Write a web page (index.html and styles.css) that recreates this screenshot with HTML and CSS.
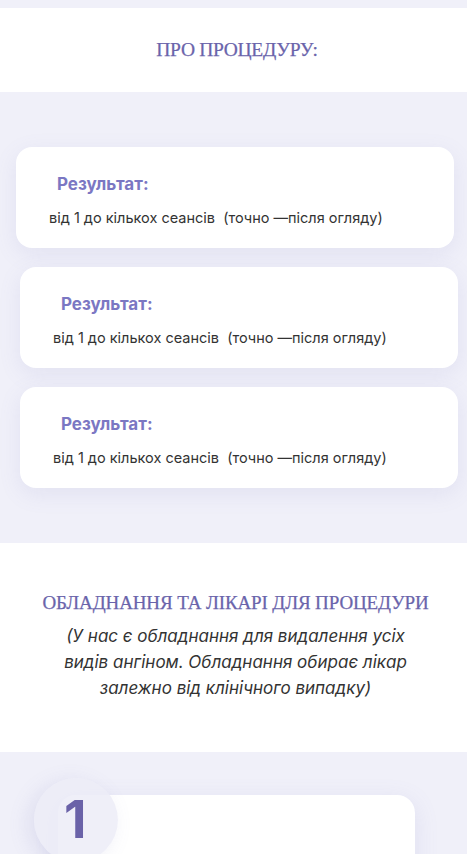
FILE: index.html
```html
<!DOCTYPE html>
<html lang="uk">
<head>
<meta charset="utf-8">
<title>Про процедуру</title>
<link rel="stylesheet" href="styles.css">
</head>
<body>
<section class="band band-white intro">
  <h2 class="title">ПРО ПРОЦЕДУРУ:</h2>
</section>
<section class="band band-lav results">
  <div class="card card-first">
    <h3 class="card-head">Результат:</h3>
    <p class="card-text">від 1 до кількох сеансів&nbsp; (точно —після огляду)</p>
  </div>
  <div class="card">
    <h3 class="card-head">Результат:</h3>
    <p class="card-text">від 1 до кількох сеансів&nbsp; (точно —після огляду)</p>
  </div>
  <div class="card">
    <h3 class="card-head">Результат:</h3>
    <p class="card-text">від 1 до кількох сеансів&nbsp; (точно —після огляду)</p>
  </div>
</section>
<section class="band band-white equip">
  <h2 class="title title-wide">ОБЛАДНАННЯ ТА ЛІКАРІ ДЛЯ ПРОЦЕДУРИ</h2>
  <p class="note">(У нас є обладнання для видалення усіх видів ангіном. Обладнання обирає лікар залежно від клінічного випадку)</p>
</section>
<section class="band band-lav steps">
  <div class="step">
    <div class="step-card"></div>
    <div class="step-num">1</div>
  </div>
</section>
</body>
</html>
```
FILE: styles.css
```css
html, body {
  margin: 0;
  padding: 0;
}
body {
  background: #f0f0f9;
  font-family: Inter, "Noto Sans", sans-serif;
  color: #333;
  overflow: hidden;
  height: 854px;
}
.band-white {
  background: #fff;
}
.band-lav {
  background: #f0f0f9;
}
.intro {
  margin-top: 8px;
  height: 84px;
  box-sizing: border-box;
  padding-left: 7px;
  display: flex;
  align-items: center;
  justify-content: center;
}
.title {
  margin: 0;
  font-family: "Liberation Serif", serif;
  font-weight: normal;
  font-size: 19.5px;
  letter-spacing: -0.3px;
  color: #6a64ab;
  text-align: center;
  -webkit-text-stroke: 0.25px #6a64ab;
}
.results {
  padding: 55px 0 55px;
  display: flex;
  flex-direction: column;
  gap: 19px;
}
.card {
  background: #fff;
  border-radius: 16px;
  margin-left: 20px;
  width: 438px;
  height: 101px;
  box-sizing: border-box;
  padding: 27px 0 0 33px;
  box-shadow: 0 6px 22px rgba(120, 120, 190, 0.12);
}
.card-first {
  margin-left: 16px;
}
.card-head {
  margin: 0 0 0 8px;
  font-size: 17px;
  font-weight: 700;
  color: #7b77c3;
  line-height: 20px;
}
.card-text {
  margin: 14px 0 0;
  font-size: 14.5px;
  line-height: 20px;
  color: #333;
}
.equip {
  height: 209px;
  box-sizing: border-box;
  padding-top: 48px;
  padding-left: 4px;
  text-align: center;
}
.title-wide {
  font-size: 19px;
  line-height: 24px;
  letter-spacing: -0.12px;
}
.note {
  margin: 8px auto 0;
  width: 360px;
  font-style: italic;
  font-size: 17px;
  line-height: 26px;
  color: #333;
}
.steps {
  height: 102px;
  padding-top: 43px;
  box-sizing: border-box;
}
.step {
  position: relative;
  height: 200px;
}
.step-card {
  margin-left: 58px;
  width: 357px;
  height: 200px;
  background: #fff;
  border-radius: 18px;
  box-shadow: 0 6px 24px rgba(120, 120, 190, 0.14);
}
.step-num {
  position: absolute;
  left: 34px;
  top: -17px;
  width: 84px;
  height: 84px;
  border-radius: 50%;
  background: rgba(236, 236, 247, 0.85);
  box-shadow: -6px 4px 20px rgba(120, 120, 190, 0.15);
  font-weight: 700;
  font-size: 52px;
  color: #6a62a8;
  line-height: 84px;
  box-sizing: border-box;
  padding-left: 30px;
}
```
